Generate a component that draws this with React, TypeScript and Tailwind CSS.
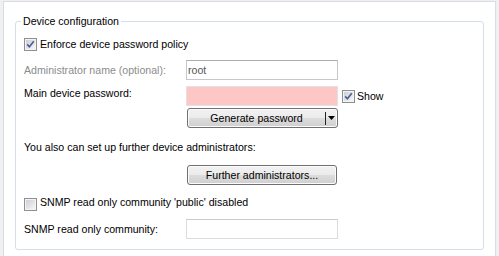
import React from "react";

function CheckBox({ checked }: { checked: boolean }) {
  return (
    <svg width="13" height="13" viewBox="0 0 13 13" className="shrink-0 block">
      <defs>
        <linearGradient id={checked ? "cbg1" : "cbg2"} x1="0" y1="0" x2="1" y2="1">
          <stop offset="0" stopColor="#cbcfd5" />
          <stop offset="1" stopColor="#f6f6f6" />
        </linearGradient>
      </defs>
      <rect x="0.5" y="0.5" width="12" height="12" fill="#f4f4f4" stroke="#8f8f8f" />
      <rect x="2" y="2" width="9" height="9" fill={`url(#${checked ? "cbg1" : "cbg2"})`} />
      {checked && (
        <path d="M3.2 6.4 L5.4 8.8 L9.8 3.2" fill="none" stroke="#4b5f98" strokeWidth="1.7" />
      )}
    </svg>
  );
}

const btn =
  "rounded-[3px] border border-[#707070] bg-[linear-gradient(to_bottom,#f2f2f2_0%,#ebebeb_50%,#dddddd_50%,#cfcfcf_100%)] shadow-[inset_0_0_0_1px_#fbfbfb] text-black";

export default function App() {
  return (
    <div
      className="w-[499px] h-[256px] bg-[#f0f0f0] overflow-hidden flex text-[10.6px] leading-[13px] text-black"
      style={{ fontFamily: '"Liberation Sans", Arial, sans-serif' }}
    >
      <div className="ml-[3px] mt-[1px] w-[493px] h-[255px] bg-white border-l border-t border-r border-[#d6dde5] flex flex-col">
        <div className="ml-[11px] mt-[19px] w-[469px] h-[229px] relative border border-[#d5dfe5] rounded-[3px]">
          <div className="absolute left-[5px] top-[-7px] px-[2px] bg-white whitespace-nowrap">Device configuration</div>
          <div className="pl-[8px] flex flex-col">
            <div className="mt-[16px] h-[13px] flex items-start">
              <CheckBox checked />
              <span className="ml-[3px] whitespace-nowrap">Enforce device password policy</span>
            </div>

            <div className="mt-[9px] h-[20px] flex items-center">
              <span className="w-[162px] text-[#8c8c8c] whitespace-nowrap">Administrator name (optional):</span>
              <div className="w-[152px] h-[20px] bg-white border border-[#c4c7cc] border-t-[#abadb3] flex items-center pl-[1px] text-[#555]">
                root
              </div>
            </div>

            <div className="mt-[6px] h-[20px] flex items-start">
              <span className="w-[162px] mt-[1px] whitespace-nowrap">Main device password:</span>
              <div className="w-[152px] h-[20px] bg-[#ffc6c6] border border-[#e2e2e2]" />
              <div className="ml-[4px] mt-[4px]">
                <CheckBox checked />
              </div>
              <span className="ml-[2px] mt-[4px]">Show</span>
            </div>

            <div className="mt-[2px] ml-[163px] w-[151px] h-[20px] flex">
              <div className={`${btn} w-full h-full flex`}>
                <div className="w-[137px] flex items-center justify-center">Generate password</div>
                <div className="w-px h-[13px] mt-[3px] bg-[#222]" />
                <div className="flex-1 flex items-center justify-center">
                  <svg width="7" height="4" viewBox="0 0 7 4" className="block">
                    <path d="M0 0 H7 L3.5 4 Z" fill="#000" />
                  </svg>
                </div>
              </div>
            </div>

            <div className="mt-[13px] h-[13px] whitespace-nowrap">You also can set up further device administrators:</div>

            <div className="mt-[11px] ml-[163px] w-[150px] h-[20px]">
              <div className={`${btn} w-full h-full flex items-center justify-center`}>Further administrators...</div>
            </div>

            <div className="mt-[11px] h-[15px] flex items-start">
              <div className="mt-[2px]">
                <CheckBox checked={false} />
              </div>
              <span className="ml-[3px] whitespace-nowrap">SNMP read only community 'public' disabled</span>
            </div>

            <div className="mt-[8px] h-[20px] flex items-start">
              <span className="w-[162px] mt-[4px] whitespace-nowrap">SNMP read only community:</span>
              <div className="w-[152px] h-[20px] bg-white border border-[#dadce0] border-t-[#c8cacf]" />
            </div>
          </div>
        </div>
      </div>
    </div>
  );
}
